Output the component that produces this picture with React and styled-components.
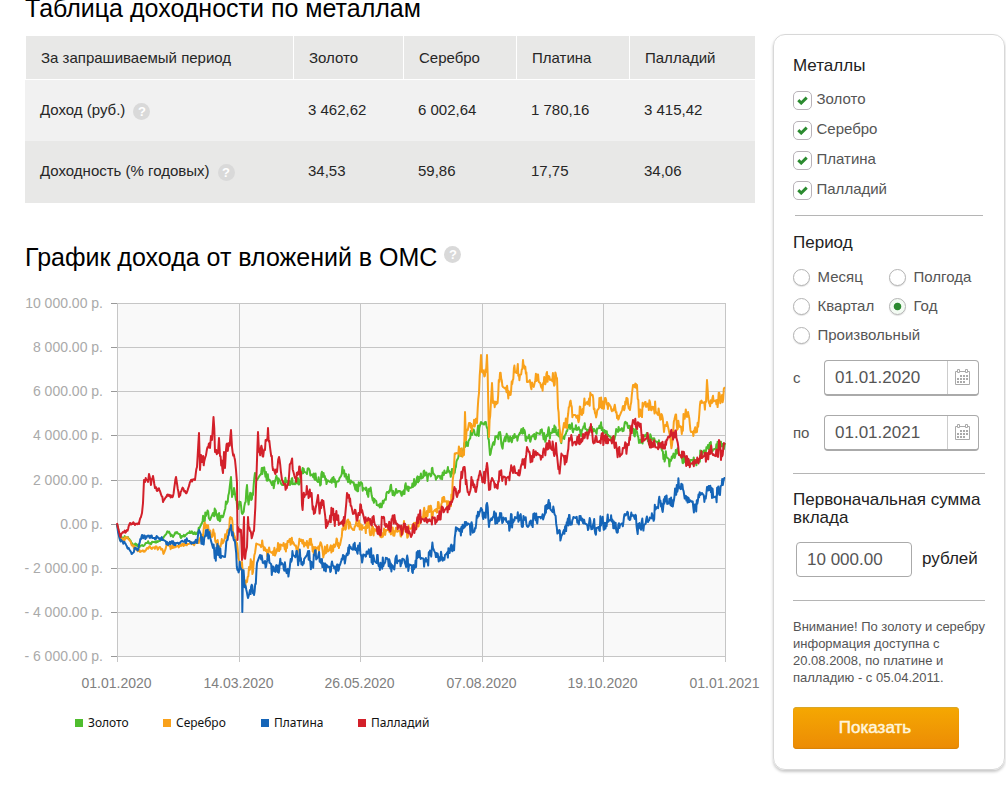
import React from 'react'

import styled, { createGlobalStyle } from 'styled-components'

const colors = {
  gold: '#4fbd2e',
  silver: '#f9a11b',
  platinum: '#1565b8',
  palladium: '#d3202a',
  text: '#262626',
  label: '#555',
  border: '#b5b5b5',
}

const GlobalStyle = createGlobalStyle`
  * {
    box-sizing: border-box;
  }

  body {
    background: #fff;
    color: ${colors.text};
    font-family: 'Liberation Sans', Arial, sans-serif;
    margin: 0;
    overflow: hidden;
  }
`

const Page = styled.div`
  display: flex;
  gap: 18px;
  height: 788px;
  padding-left: 25px;
  width: 1006px;
`

const Main = styled.main`
  flex: none;
  width: 730px;
`

const Title = styled.h2`
  align-items: flex-start;
  color: #000;
  display: flex;
  font-size: 25px;
  font-weight: 400;
  gap: 7px;
  line-height: 28px;
  margin: ${props => props.margin};
  white-space: nowrap;
`

const Table = styled.div`
  width: 730px;
`

const Row = styled.div`
  align-items: stretch;
  background: ${props => props.shade};
  display: grid;
  grid-template-columns: 268px 110px 113px 113px 1fr;
  height: ${props => props.height}px;
  padding-bottom: ${props => props.lift || 0}px;
`

const HeadRow = styled(Row)`
  border-bottom: 1px solid #fff;
  padding-left: 1px;
`

const Cell = styled.div`
  align-items: center;
  display: flex;
  font-size: 15px;
  gap: 8px;
  padding-left: 15px;
  white-space: nowrap;
`

const HeadCell = styled(Cell)`
  background: #e8e8e7;
  border-right: ${props => (props.last ? 0 : 1)}px solid #fff;
`

const Help = styled.span`
  align-items: center;
  background: #d9d9d9;
  border-radius: 50%;
  color: #fff;
  display: inline-flex;
  flex: none;
  font-size: 13px;
  font-weight: 700;
  height: 17px;
  justify-content: center;
  line-height: 17px;
  margin-top: ${props => props.shift || 0}px;
  width: 17px;
`

const Plot = styled.svg`
  display: block;
  margin-left: -5px;
`

const AxisText = styled.text`
  fill: ${props => props.tone};
  font-size: 14px;
`

const Line = styled.polyline`
  fill: none;
  stroke: ${props => props.color};
  stroke-linejoin: round;
  stroke-width: 2;
`

const Legend = styled.div`
  display: flex;
  font-family: 'Noto Sans', sans-serif;
  font-size: 12px;
  line-height: 16px;
  margin-top: 15px;
  padding-left: 50px;
`

const LegendItem = styled.div`
  align-items: center;
  color: #111;
  display: flex;
  gap: 5px;
  width: ${props => props.width}px;

  &::before {
    background: ${props => props.color};
    content: '';
    height: 8px;
    width: 8px;
  }
`

const Sidebar = styled.aside`
  border: 1px solid #d8d8d8;
  border-radius: 12px;
  box-shadow: 0 2px 3px rgba(0, 0, 0, 0.22);
  flex: none;
  height: 736px;
  margin-top: 34px;
  padding: 21px 19px 0;
  width: 232px;
`

const Heading = styled.h3`
  color: #222;
  font-size: 17px;
  font-weight: 400;
  line-height: ${props => props.line || 20}px;
  margin: 0;
`

const Checks = styled.div`
  display: flex;
  flex-direction: column;
  gap: 11px;
  margin-top: 15px;
`

const Option = styled.label`
  align-items: flex-start;
  color: ${colors.label};
  display: flex;
  font-size: 15px;
  gap: ${props => props.gap}px;
  line-height: ${props => props.line}px;
`

const Box = styled.span`
  align-items: center;
  border: 1px solid #b9b3b9;
  border-radius: 5px;
  display: flex;
  height: 19px;
  justify-content: center;
  width: 19px;
`

const Divider = styled.hr`
  border: 0;
  border-top: 1px solid ${colors.border};
  margin: ${props => props.margin};
`

const Radios = styled.div`
  display: grid;
  grid-template-columns: 96px 1fr;
  margin-top: 16px;
  row-gap: 12px;
`

const Dot = styled.span`
  background: ${props =>
    props.checked ? 'radial-gradient(circle, #2b8a2f 0 3.4px, #f3fbf3 4.2px)' : '#fff'};
  border: 1px solid #b4b4b4;
  border-radius: 50%;
  box-shadow: 0 1px 1px rgba(0, 0, 0, 0.12);
  flex: none;
  height: 17px;
  width: 17px;
`

const Field = styled.div`
  align-items: center;
  color: ${colors.label};
  display: flex;
  font-size: 15px;
  margin-top: ${props => props.top}px;
  padding-left: ${props => props.indent || 0}px;
`

const FieldName = styled.span`
  margin-top: -2px;
  width: 31px;
`

const Input = styled.div`
  align-items: center;
  border: 1px solid #aaa;
  border-bottom-width: ${props => (props.flat ? 1 : 2)}px;
  border-radius: 4px;
  color: ${colors.label};
  display: flex;
  font-size: 17px;
  height: ${props => (props.flat ? 35 : 36)}px;
  padding-left: 10px;
  width: ${props => props.width}px;
`

const CalendarSlot = styled.span`
  align-items: center;
  align-self: stretch;
  border-left: 1px solid #ccc;
  display: flex;
  justify-content: center;
  margin-left: auto;
  padding-right: 2px;
  width: 31px;
`

const Unit = styled.span`
  color: #222;
  font-size: 17px;
  margin: -2px 0 0 10px;
`

const Note = styled.p`
  color: ${colors.label};
  font-size: 13px;
  line-height: 17px;
  margin: 17px -4px 0 0;
  white-space: nowrap;
`

const Button = styled.button`
  -webkit-text-stroke: 0.5px #fff5dc;
  background: linear-gradient(#f5a802, #ec8b05);
  border: 0;
  border-radius: 4px;
  box-shadow: inset 0 -1px 1px #d98208, inset 0 1px 0 #d8a72a;
  color: #fff5dc;
  display: block;
  font-family: inherit;
  font-size: 17px;
  height: 42px;
  margin-top: 21px;
  padding: 0 2px 1px 0;
  width: 166px;
`

const metals = [
  { name: 'Золото', income: '3 462,62', rate: '34,53', color: colors.gold, width: 88 },
  { name: 'Серебро', income: '6 002,64', rate: '59,86', color: colors.silver, width: 98 },
  { name: 'Платина', income: '1 780,16', rate: '17,75', color: colors.platinum, width: 97 },
  { name: 'Палладий', income: '3 415,42', rate: '34,06', color: colors.palladium, width: 90 },
]

const yLabels = [
  ['10 000.00 р.', 303.5],
  ['8 000.00 р.', 347.5],
  ['6 000.00 р.', 391.5],
  ['4 000.00 р.', 435.5],
  ['2 000.00 р.', 480.5],
  ['0.00 р.', 524.5],
  ['- 2 000.00 р.', 568.5],
  ['- 4 000.00 р.', 612.5],
  ['- 6 000.00 р.', 656.5],
]

const xLabels = [
  ['01.01.2020', 117.5],
  ['14.03.2020', 239.5],
  ['26.05.2020', 360.5],
  ['07.08.2020', 482.5],
  ['19.10.2020', 603.5],
  ['01.01.2021', 725.5],
]

const goldData =
  '117,524 120,537 123,538 128,537 132,543 140,546 147,543 160,541 168,532 173,537 177,532 181,538 188,533 197,533 202,523 207,513 210,520 213,513 218,520 223,517 227,503 229,493 231,477 232,497 234,488 236,500 240,503 243,513 245,503 247,485 248,500 253,495 255,473 257,480 260,475 266,472 272,485 277,478 282,485 290,485 300,482 302,471 312,475 318,482 323,477 330,482 337,482 343,473 347,477 352,482 357,485 370,491 375,500 381,505 387,492 400,491 413,487 422,478 433,473 437,478 445,473 453,472 457,460 465,447 472,435 477,435 481,422 487,428 490,455 493,443 500,432 502,447 505,437 514,438 522,433 528,438 537,433 543,435 555,432 563,438 569,427 577,430 583,428 588,430 600,428 605,433 612,438 618,432 627,423 632,428 637,432 639,443 645,435 652,440 660,443 664,455 670,460 677,453 687,460 697,460 708,445 713,450 725,443'

const silverData =
  '117,524 120,540 128,538 135,548 140,552 147,548 160,547 164,553 167,545 173,548 180,545 197,543 202,535 207,527 212,537 214,534 217,547 223,543 228,530 231,519 233,532 237,543 239,560 242,562 243,577 247,582 249,567 253,572 255,553 257,544 260,545 265,548 272,553 278,543 287,548 293,542 297,550 303,540 308,548 315,547 326,553 332,548 340,545 343,530 347,522 353,530 363,528 373,527 381,537 387,530 400,531 413,528 422,518 433,512 443,502 452,500 454,467 456,453 464,455 465,412 466,440 469,423 477,423 479,393 481,355 482,372 486,372 487,355 489,437 492,383 493,403 497,402 500,373 503,387 510,392 515,372 520,375 523,360 527,382 537,380 542,385 547,372 550,380 557,378 558,408 561,442 564,423 567,428 570,402 573,415 582,415 585,405 592,395 595,413 600,407 605,398 613,410 620,415 627,398 630,410 633,385 637,385 639,417 645,402 650,402 658,415 662,415 664,432 667,422 672,445 675,417 680,427 687,417 691,432 697,432 701,403 706,402 707,380 709,403 717,400 722,395 725,388'

const platinumData =
  '117,524 118,532 120,540 125,543 131,552 138,550 142,535 150,538 160,538 167,542 177,543 185,540 197,543 199,530 202,537 210,537 213,548 218,555 225,557 227,540 231,525 235,542 238,570 242,570 242.3,612 243,573 248,598 250,590 254,595 257,563 260,555 270,563 277,570 282,563 289,572 293,555 302,562 307,555 312,565 318,557 328,567 340,565 343,555 350,548 357,552 370,557 381,567 387,558 392,565 400,560 415,567 419,557 427,560 433,548 437,557 445,555 453,548 457,528 462,532 466,522 475,528 481,508 485,517 487,503 489,527 493,517 500,513 507,522 515,517 528,527 535,517 542,517 547,505 555,515 561,538 565,527 569,515 580,520 583,523 597,528 610,520 620,525 633,515 640,528 648,522 657,507 670,503 679,487 687,497 695,505 702,493 705,497 707,487 712,498 720,495 725,478'

const palladiumData =
  '117,523 120,536 123,532 127,530 130,523 135,525 139,524 142,513 143,503 144,480 148,482 149,474 151,485 153,476 155,488 160,491 163,502 167,495 173,496 176,477 179,497 182,489 187,492 191,480 195,480 197,467 199,433 200,470 201,455 202,462 207,449 210,448 211,436 212,440 213.5,417 215,452 218,453 219,438 220,456 223,473 224,452 225,468 226,450 229,443 231,430 232,447 235,460 236,470 237,483 237.5,540 238,527 241,530 242,560 244,517 244.5,558 247,547 248,517 250,531 254,531 256,487 258,432 259,452 265,450 268,428 270,447 273,470 277,472 279,457 282,480 288,485 291,463 295,478 301,472 302,505 305,495 311,493 315,513 318,495 319,506 324,507 326,528 332,515 337,520 340,524 345,517 347,493 349,495 353,514 359,515 361,505 365,523 370,519 376,526 380,530 383,518 388,527 395,520 400,527 408,527 411,537 415,528 419,518 425,520 433,518 440,516 447,507 452,502 455,490 457,497 462,478 464,467 467,487 469,495 472,485 476,492 480,471 483,482 487,463 489,490 492,478 497,488 500,475 507,478 513,473 520,473 522,463 525,468 527,447 530,455 537,453 542,457 547,443 552,450 556,443 559,467 562,455 567,458 569,438 573,443 578,440 583,434 592,430 593,442 600,442 605,437 613,442 621,455 627,448 630,440 633,420 640,427 642,442 647,438 653,447 662,448 666,445 668,437 677,440 679,455 685,457 688,465 695,462 702,458 707,453 713,455 718,457 719,440 721,460 725,443'

// Daily swings between the key quotes: bursts of trading days, flat weekends
const withSwings = (data, seed, size) => {
  let state = seed
  const random = () => {
    state = (state * 16807) % 2147483647
    return state / 2147483647
  }
  random()
  const points = data.split(' ').map(pair => pair.split(',').map(Number))
  const result = []
  let drift = 0

  points.forEach(([x, y], i) => {
    result.push([x, y])
    const next = points[i + 1]
    if (!next) return
    const steps = Math.floor((next[0] - x) / 0.55)
    for (let n = 1; n < steps; n++) {
      const part = n / steps
      const px = x + (next[0] - x) * part
      const weekend = px % 11.7 < 2.4
      const calm = px < 200 ? 0.3 : 1
      if (n % 3 === 0) drift = (random() - 0.5) * size
      const swing = weekend ? 0 : (drift + (random() - 0.5) * size * 0.9) * calm
      result.push([px, y + (next[1] - y) * part + swing])
    }
  })

  return result.map(([x, y]) => `${x.toFixed(1)},${y.toFixed(1)}`).join(' ')
}

const series = [
  { color: colors.gold, points: withSwings(goldData, 1789, 8) },
  { color: colors.silver, points: withSwings(silverData, 9173, 11) },
  { color: colors.platinum, points: withSwings(platinumData, 5351, 12) },
  { color: colors.palladium, points: withSwings(palladiumData, 2917, 11) },
]

const Chart = () => (
  <Plot width="745" height="410" viewBox="20 290 745 410">
    <rect x="117" y="303" width="608" height="353" fill="#f9f9f9" />
    {yLabels.map(([label, y]) => (
      <g key={label}>
        <path d={`M117 ${y}H726`} stroke="#c6c6c6" />
        <path d={`M111 ${y}H117`} stroke="#999" />
        <AxisText x="103" y={y + 4.5} textAnchor="end" tone="#aaa">
          {label}
        </AxisText>
      </g>
    ))}
    {xLabels.map(([label, x]) => (
      <g key={label}>
        <path d={`M${x} 303V662`} stroke="#c6c6c6" />
        <AxisText x={x - 1} y="688" textAnchor="middle" tone="#808080">
          {label}
        </AxisText>
      </g>
    ))}
    {series.map(({ color, points }) => (
      <Line key={color} color={color} points={points} />
    ))}
  </Plot>
)

const Check = () => (
  <svg width="11" height="9" viewBox="0 0 11 9">
    <path d="M1.3 4.2L4.2 7L9.7 1.7" fill="none" stroke="#2b8a2f" strokeWidth="3" />
  </svg>
)

const Calendar = () => (
  <svg width="15" height="17" viewBox="0 0 15 17" fill="none" stroke="#aaa">
    <path d="M2.5 2.5H.5V15.5H14.5V2.5H12.5M4.5 2.5H10.5M2.5 .5H4.5V3.5H2.5ZM10.5 .5H12.5V3.5H10.5Z" />
    <path d="M5 7H13M2 10H13M2 13H10" strokeWidth="2" strokeDasharray="2 1" />
  </svg>
)

const Radio = ({ children, checked }) => (
  <Option gap={7.5} line={16}>
    <Dot checked={checked} />
    {children}
  </Option>
)

const DateField = ({ name, value, top }) => (
  <Field top={top}>
    <FieldName>{name}</FieldName>
    <Input width={155}>
      {value}
      <CalendarSlot>
        <Calendar />
      </CalendarSlot>
    </Input>
  </Field>
)

const App = () => (
  <>
    <GlobalStyle />
    <Page>
      <Main>
        <Title margin="-6px 0 14px">Таблица доходности по металлам</Title>
        <Table>
          <HeadRow height={44} shade="#fff">
            <HeadCell>За запрашиваемый период</HeadCell>
            {metals.map(({ name }, i) => (
              <HeadCell key={name} last={i === 3}>
                {name}
              </HeadCell>
            ))}
          </HeadRow>
          <Row height={61} shade="#f1f1f1" lift={2}>
            <Cell>
              Доход (руб.) <Help shift={4}>?</Help>
            </Cell>
            {metals.map(({ name, income }) => (
              <Cell key={name}>{income}</Cell>
            ))}
          </Row>
          <Row height={62} shade="#e8e8e7" lift={3}>
            <Cell>
              Доходность (% годовых) <Help shift={4}>?</Help>
            </Cell>
            {metals.map(({ name, rate }) => (
              <Cell key={name}>{rate}</Cell>
            ))}
          </Row>
        </Table>
        <Title margin="40px 0 19px">
          График дохода от вложений в ОМС <Help shift={3}>?</Help>
        </Title>
        <Chart />
        <Legend>
          {metals.map(({ name, color, width }) => (
            <LegendItem key={name} color={color} width={width}>
              {name}
            </LegendItem>
          ))}
        </Legend>
      </Main>
      <Sidebar>
        <Heading>Металлы</Heading>
        <Checks>
          {metals.map(({ name }) => (
            <Option key={name} gap={4.5} line={15}>
              <Box>
                <Check />
              </Box>
              {name}
            </Option>
          ))}
        </Checks>
        <Divider margin="15px 2px 17px" />
        <Heading>Период</Heading>
        <Radios>
          <Radio>Месяц</Radio>
          <Radio>Полгода</Radio>
          <Radio>Квартал</Radio>
          <Radio checked>Год</Radio>
          <Radio>Произвольный</Radio>
        </Radios>
        <DateField name="с" value="01.01.2020" top={16} />
        <DateField name="по" value="01.01.2021" top={19} />
        <Divider margin="22px 0 17px" />
        <Heading line={18}>
          Первоначальная сумма
          <br />
          вклада
        </Heading>
        <Field top={15} indent={3}>
          <Input flat width={116}>
            10 000.00
          </Input>
          <Unit>рублей</Unit>
        </Field>
        <Divider margin="23px 0 17px" />
        <Note>
          Внимание! По золоту и серебру
          <br />
          информация доступна с<br />
          20.08.2008, по платине и<br />
          палладию - с 05.04.2011.
        </Note>
        <Button>Показать</Button>
      </Sidebar>
    </Page>
  </>
)

export default App
